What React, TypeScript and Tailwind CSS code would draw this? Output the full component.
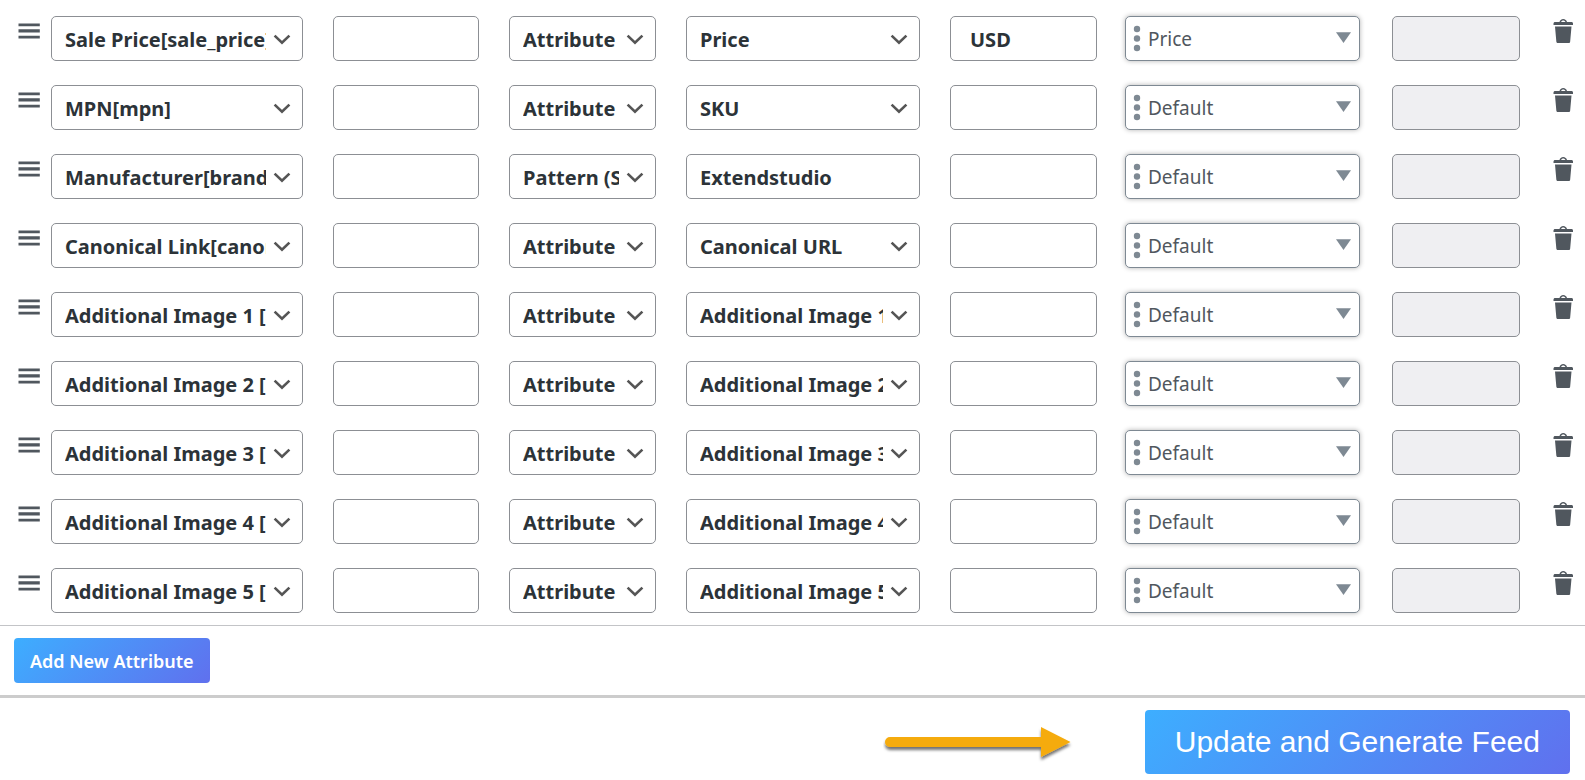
import React from 'react';

type Row = {
  field: string;
  type: string;
  value: string;
  suffix?: string;
  output: string;
  pattern?: boolean;
};

const rows: Row[] = [
  { field: 'Sale Price[sale_price]', type: 'Attribute', value: 'Price', suffix: 'USD', output: 'Price' },
  { field: 'MPN[mpn]', type: 'Attribute', value: 'SKU', output: 'Default' },
  { field: 'Manufacturer[brand]', type: 'Pattern (Static)', value: 'Extendstudio', output: 'Default', pattern: true },
  { field: 'Canonical Link[canonical_link]', type: 'Attribute', value: 'Canonical URL', output: 'Default' },
  ...[1, 2, 3, 4, 5].map((n) => ({
    field: `Additional Image ${n} [additional_image_link]`,
    type: 'Attribute',
    value: `Additional Image ${n}`,
    output: 'Default',
  })),
];

const boxClass =
  'block h-[45px] w-full rounded-[5px] border border-[#8c8f94] bg-white pt-[2px] text-[20px] font-bold text-[#2c3338] outline-none';

function BoldSelect({ value, label }: { value: string; label: string }) {
  return (
    <div className="relative">
      <select aria-label={label} defaultValue={value} className={`${boxClass} appearance-none pr-[36px] pl-[13px]`}>
        <option>{value}</option>
      </select>
      <svg
        className="pointer-events-none absolute top-[18px] right-[12px]"
        width="18"
        height="12"
        viewBox="0 0 18 12"
        fill="none"
        stroke="#555"
        strokeWidth="2.6"
      >
        <path d="M1.6 1.6 9 8.8 16.4 1.6" />
      </svg>
    </div>
  );
}

function OutputSelect({ value, label }: { value: string; label: string }) {
  return (
    <div className="relative">
      <select
        aria-label={label}
        defaultValue={value}
        className="block h-[45px] w-full appearance-none rounded-[5px] border border-[#7e8993] bg-white pt-[2px] pr-8 pl-[22px] text-[19px] text-[#50575e] shadow-[0_0_5px_rgba(0,0,0,0.3)] outline-none"
      >
        <option>{value}</option>
      </select>
      <svg
        className="pointer-events-none absolute top-[9px] left-[8px]"
        width="8"
        height="27"
        viewBox="0 0 8 27"
        fill="#7e8993"
      >
        <circle cx="4" cy="4" r="3.2" />
        <circle cx="4" cy="13.5" r="3.2" />
        <circle cx="4" cy="23" r="3.2" />
      </svg>
      <svg
        className="pointer-events-none absolute top-[16px] right-[9px]"
        width="15"
        height="11"
        viewBox="0 0 15 11"
        fill="#7e8993"
      >
        <path d="M0 .3h15L7.5 11z" />
      </svg>
    </div>
  );
}

export default function App() {
  return (
    <main className="bg-white font-['Noto_Sans','Open_Sans',sans-serif]">
      <form onSubmit={(e) => e.preventDefault()}>
        <div className="border-b border-[#c3c4c7] pt-1">
          <table className="w-full table-fixed border-collapse">
            <colgroup>
              <col className="w-[51px]" />
              <col className="w-[282px]" />
              <col className="w-[176px]" />
              <col className="w-[177px]" />
              <col className="w-[264px]" />
              <col className="w-[175px]" />
              <col className="w-[267px]" />
              <col className="w-[128px]" />
              <col className="w-[65px]" />
            </colgroup>
            <tbody>
              {rows.map((row) => (
                <tr key={row.field} className="align-top">
                  <td className="py-3 pl-[14px]">
                    <button type="button" aria-label="Move row" className="block cursor-move">
                      <svg width="30" height="30" viewBox="0 0 30 30" fill="#50575e">
                        <path d="M4.5 7.5h21.3v2.7H4.5zM4.5 13.3h21.3v3.2H4.5zM4.5 19.8h21.3v2.6H4.5z" />
                      </svg>
                    </button>
                  </td>
                  <td className="py-3 pr-[30px]">
                    <BoldSelect value={row.field} label="Feed attribute" />
                  </td>
                  <td className="py-3 pr-[30px]">
                    <input aria-label="Prefix" className={`${boxClass} px-[19px]`} />
                  </td>
                  <td className="py-3 pr-[30px]">
                    <BoldSelect value={row.type} label="Type" />
                  </td>
                  <td className="py-3 pr-[30px]">
                    {row.pattern ? (
                      <input aria-label="Value" defaultValue={row.value} className={`${boxClass} px-[13px]`} />
                    ) : (
                      <BoldSelect value={row.value} label="Value" />
                    )}
                  </td>
                  <td className="py-3 pr-7">
                    <input aria-label="Suffix" defaultValue={row.suffix} className={`${boxClass} px-[19px]`} />
                  </td>
                  <td className="py-3 pr-8">
                    <OutputSelect value={row.output} label="Output type" />
                  </td>
                  <td className="py-3">
                    <input
                      aria-label="Output limit"
                      disabled
                      className="block h-[45px] w-full rounded-[5px] border border-[#8c8f94] bg-[#efeff2] px-[19px]"
                    />
                  </td>
                  <td className="py-3 pr-[6px]">
                    <button type="button" aria-label="Delete row" className="ml-auto block">
                      <svg width="30" height="30" viewBox="0 0 20 20" fill="#50575e">
                        <path d="M12 4h3c.6 0 1 .4 1 1v1H3V5c0-.6.5-1 1-1h3c.2-1.1 1.3-2 2.5-2s2.3.9 2.5 2zM8 4h3c-.2-.6-.9-1-1.5-1S8.2 3.4 8 4zM4 7h11l-.9 10.1c0 .5-.5.9-1 .9H5.9c-.5 0-.9-.4-1-.9L4 7z" />
                      </svg>
                    </button>
                  </td>
                </tr>
              ))}
            </tbody>
          </table>
        </div>
        <div className="border-b-[3px] border-[#ccc] px-[14px] py-3">
          <button
            type="button"
            className="block h-[45px] rounded-[4px] bg-[linear-gradient(135deg,#3daeff_0%,#6070ee_100%)] px-4 pt-[2px] text-[18px] font-semibold text-white"
          >
            Add New Attribute
          </button>
        </div>
        <div className="flex items-center justify-end px-[15px] pt-3 pb-[6px]">
          <svg className="mr-[72px]" width="190" height="44" viewBox="0 0 190 44" fill="#f5ab0c">
            <defs>
              <filter id="arrow-shadow" x="-10%" y="-30%" width="120%" height="180%">
                <feDropShadow dx="0" dy="3" stdDeviation="1.8" floodColor="#000" floodOpacity="0.55" />
              </filter>
            </defs>
            <path filter="url(#arrow-shadow)" d="M7 17H158V7L187.500 22 158 37V27H7a5 5 0 0 1 0-10z" />
          </svg>
          <button
            type="submit"
            className="h-16 rounded-[4px] bg-[linear-gradient(135deg,#3daeff_0%,#6070ee_100%)] px-[30px] pb-[2px] font-['Liberation_Sans',Arial,sans-serif] text-[30px] text-white"
          >
            Update and Generate Feed
          </button>
        </div>
      </form>
    </main>
  );
}
